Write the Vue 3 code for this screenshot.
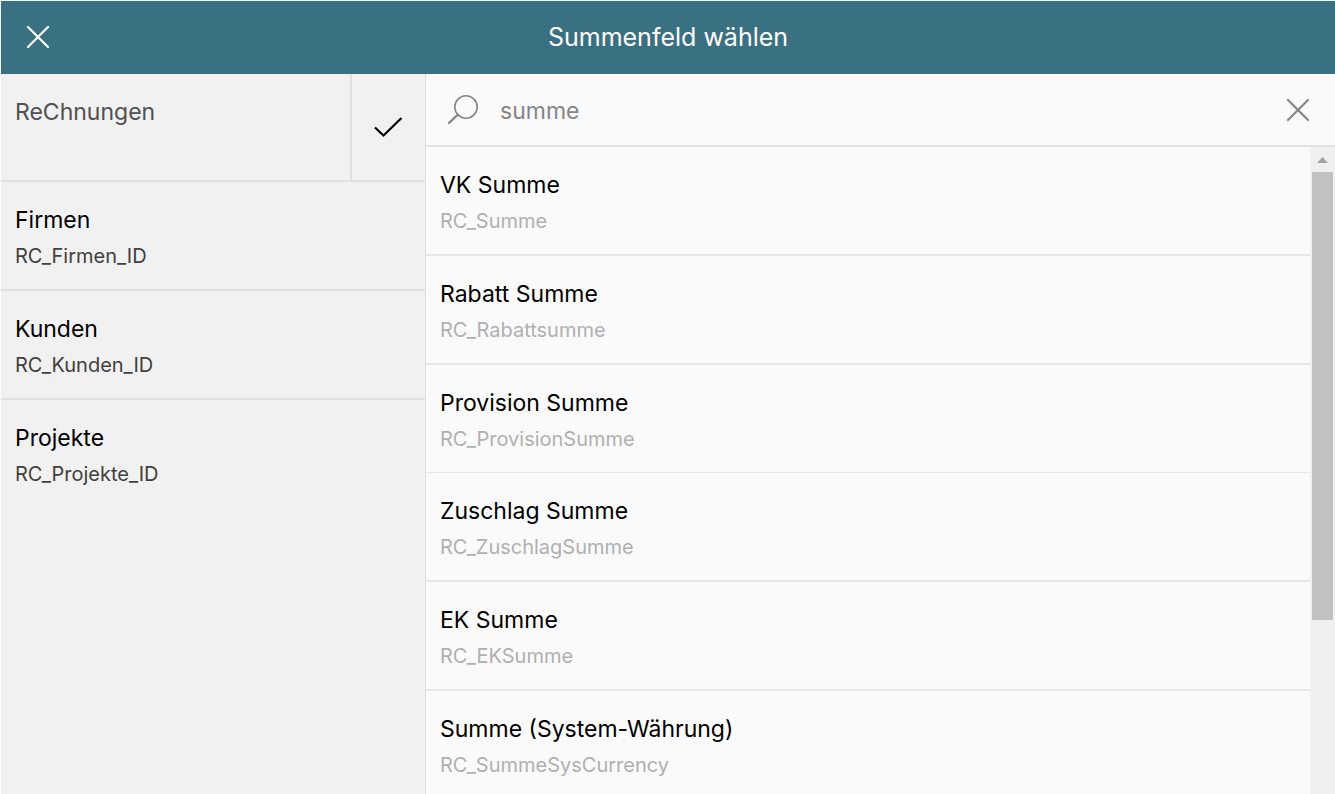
<script setup>
import { ref } from 'vue'

const query = ref('summe')

const tables = [
  { name: 'Firmen', key: 'RC_Firmen_ID' },
  { name: 'Kunden', key: 'RC_Kunden_ID' },
  { name: 'Projekte', key: 'RC_Projekte_ID' },
]

const fields = [
  { name: 'VK Summe', key: 'RC_Summe' },
  { name: 'Rabatt Summe', key: 'RC_Rabattsumme' },
  { name: 'Provision Summe', key: 'RC_ProvisionSumme' },
  { name: 'Zuschlag Summe', key: 'RC_ZuschlagSumme' },
  { name: 'EK Summe', key: 'RC_EKSumme' },
  { name: 'Summe (System-Währung)', key: 'RC_SummeSysCurrency' },
]
</script>

<template>
  <div class="dialog">
    <header class="bar">
      <button class="icon-button close" type="button" aria-label="Schließen">
        <svg width="24" height="24" viewBox="0 0 24 24" fill="none" stroke="currentColor" stroke-width="2.2" stroke-linecap="round">
          <path d="M2 1 22 21M22 1 2 21" />
        </svg>
      </button>
      <h1>Summenfeld wählen</h1>
    </header>

    <div class="body">
      <nav class="tables">
        <div class="current">
          <button class="row current-name" type="button"><span class="name">ReChnungen</span></button>
          <button class="icon-button confirm" type="button" aria-label="Übernehmen">
            <svg width="30" height="22" viewBox="0 0 30 22" fill="none" stroke="currentColor" stroke-width="2.2">
              <path d="M1 11.5 9.5 19.5 27.5 2" />
            </svg>
          </button>
        </div>
        <button v-for="t in tables" :key="t.key" class="row table-row" type="button">
          <span class="name">{{ t.name }}</span>
          <span class="key">{{ t.key }}</span>
        </button>
      </nav>

      <main class="fields">
        <div class="search">
          <label for="query" aria-label="Suche">
            <svg width="34" height="32" viewBox="0 0 34 32" fill="none" stroke="currentColor" stroke-linecap="round">
              <circle cx="20" cy="13" r="11.2" stroke-width="1.6" />
              <path d="M11.5 21 3 29" stroke-width="2.4" />
            </svg>
          </label>
          <input id="query" v-model="query" type="text" autocomplete="off" />
          <button class="icon-button clear" type="button" aria-label="Suche leeren" @click="query = ''">
            <svg width="24" height="24" viewBox="0 0 24 24" fill="none" stroke="currentColor" stroke-width="2.2" stroke-linecap="round">
              <path d="M2 2 22 22M22 2 2 22" />
            </svg>
          </button>
        </div>
        <div class="results">
          <div class="list">
            <button v-for="f in fields" :key="f.key" class="row field-row" type="button">
              <span class="name">{{ f.name }}</span>
              <span class="key">{{ f.key }}</span>
            </button>
          </div>
          <div class="scrollbar" aria-hidden="true">
            <svg class="arrow" width="11" height="6" viewBox="0 0 11 6"><path d="M0 6 5.5 0 11 6Z" fill="#a3a3a3" /></svg>
            <div class="track"><div class="thumb"></div></div>
          </div>
        </div>
      </main>
    </div>
  </div>
</template>

<style>
body {
  margin: 0;
  background: #fff;
}
</style>

<style scoped>
.dialog,
.dialog * {
  box-sizing: border-box;
}

.dialog {
  display: flex;
  flex-direction: column;
  height: 100vh;
  padding: 1px 0 0 1px;
  overflow: hidden;
  font-family: Inter, "Liberation Sans", sans-serif;
  font-weight: 400;
  color: #000;
}

button,
input {
  margin: 0;
  padding: 0;
  border: 0;
  border-radius: 0;
  background: none;
  font: inherit;
  color: inherit;
}

.icon-button {
  display: flex;
  align-items: center;
  justify-content: center;
  cursor: pointer;
}

.bar {
  display: grid;
  grid-template-columns: 74px 1fr 74px;
  flex: none;
  height: 73px;
  background: #3a7182;
  color: #fff;
}

.bar h1 {
  margin: 0;
  font-size: 25px;
  font-weight: 400;
  line-height: 73px;
  text-align: center;
}

.body {
  display: grid;
  grid-template-columns: 425px minmax(0, 1fr);
  flex: 1;
  min-height: 0;
}

.tables {
  border-right: 1px solid #e0e0e0;
  background: #f1f1f1;
}

.row {
  display: flex;
  flex-direction: column;
  align-items: flex-start;
  width: 100%;
  height: 109px;
  padding: 22px 14px 0;
  text-align: left;
  cursor: pointer;
}

.name {
  font-size: 23px;
  line-height: 32px;
}

.key {
  margin-top: 6px;
  font-size: 20px;
  line-height: 28px;
}

.current {
  display: flex;
  height: 108px;
  border-bottom: 2px solid #e0e0e0;
}

.current-name {
  flex: 1;
  height: auto;
  color: #505050;
}

.confirm {
  width: 75px;
  border-left: 2px solid #e0e0e0;
}

.table-row {
  border-bottom: 2px solid #e0e0e0;
}

.table-row:last-child {
  border-bottom: 0;
}

.table-row .key {
  color: #404040;
}

.fields {
  display: flex;
  flex-direction: column;
  min-height: 0;
  background: #fafafa;
}

.search {
  display: flex;
  align-items: center;
  flex: none;
  height: 73px;
  padding-left: 20px;
  border-bottom: 2px solid #e2e2e2;
  color: #858585;
}

.search label {
  display: flex;
}

.search input {
  flex: 1;
  min-width: 0;
  margin-left: 20px;
  padding-top: 2px;
  font-size: 23px;
  line-height: 32px;
  outline: 0;
}

.clear {
  width: 74px;
  height: 71px;
}

.results {
  display: flex;
  flex: 1;
  min-height: 0;
}

.list {
  flex: 1;
  min-width: 0;
  overflow: hidden;
}

.field-row {
  border-bottom: 2px solid #e6e6e6;
}

.field-row:nth-child(3) {
  height: 108px;
  border-bottom-width: 1px;
}

.field-row .key {
  color: #b0b0b0;
}

.scrollbar {
  display: flex;
  flex-direction: column;
  width: 25px;
  padding: 0 2px;
  background: #f0f0f0;
}

.arrow {
  flex: none;
  margin: 10px 5px 9px;
}

.track {
  flex: 1;
}

.thumb {
  height: 72%;
  background: #c1c1c1;
}
</style>
